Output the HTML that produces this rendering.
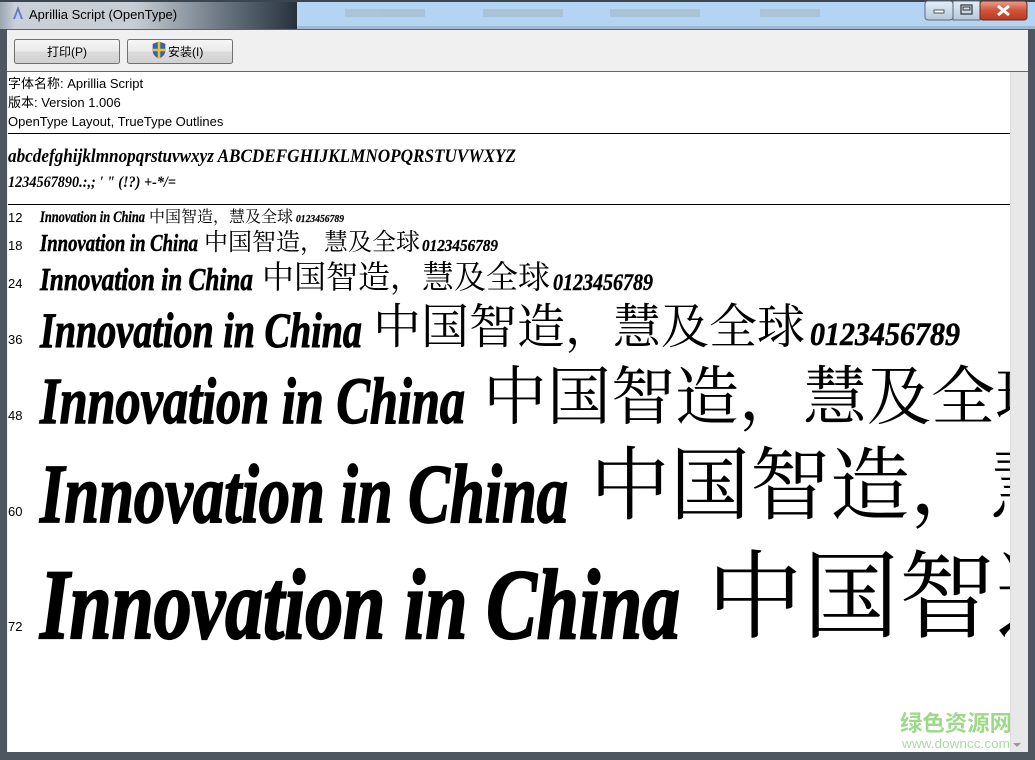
<!DOCTYPE html>
<html><head><meta charset="utf-8"><style>
html,body{margin:0;padding:0;width:1035px;height:760px;overflow:hidden;background:#fff;}
svg{display:block}
</style></head><body>
<svg width="1035" height="760" xmlns="http://www.w3.org/2000/svg">
<defs>
<linearGradient id="tb" x1="0" x2="1" y1="0" y2="0">
<stop offset="0" stop-color="#9aa6b2"/><stop offset="0.05" stop-color="#c9d0d8"/><stop offset="0.45" stop-color="#c8ced4"/><stop offset="0.75" stop-color="#6a7682"/><stop offset="1" stop-color="#26313c"/>
</linearGradient>
<linearGradient id="btn" x1="0" x2="0" y1="0" y2="1"><stop offset="0" stop-color="#f6f6f6"/><stop offset="0.5" stop-color="#e9e9e9"/><stop offset="0.51" stop-color="#dcdcdc"/><stop offset="1" stop-color="#d0d0d0"/></linearGradient>
<linearGradient id="cl" x1="0" x2="0" y1="0" y2="1"><stop offset="0" stop-color="#e8a090"/><stop offset="0.5" stop-color="#d0533c"/><stop offset="1" stop-color="#b83a20"/></linearGradient>
<linearGradient id="mm" x1="0" x2="0" y1="0" y2="1"><stop offset="0" stop-color="#e4eef8"/><stop offset="1" stop-color="#b4c8dc"/></linearGradient>
<clipPath id="cp"><rect x="8" y="72" width="1002" height="680"/></clipPath>
</defs>
<!-- frame -->
<rect x="0" y="0" width="1035" height="760" fill="#4e5660"/>
<rect x="297" y="0" width="738" height="29" fill="#b4d4f4"/>
<rect x="0" y="0" width="297" height="29" fill="url(#tb)"/>
<rect x="0" y="0" width="1035" height="2" fill="#3a4550"/>
<rect x="297" y="26" width="738" height="3" fill="#9fb7cf"/>
<g fill="#a8bccc" opacity="0.7"><rect x="345" y="9" width="80" height="8"/><rect x="483" y="9" width="80" height="8"/><rect x="610" y="9" width="90" height="8"/><rect x="760" y="9" width="60" height="8"/></g>
<path d="M13 19 L18 6 L23 19 Z" fill="#6878c8"/><path d="M15 19 L18 11 L21 19Z" fill="#c0c8f0"/>
<text x="29" y="19" font-family="Liberation Sans,sans-serif" font-size="13" fill="#000">Aprillia Script (OpenType)</text>
<!-- window buttons -->
<rect x="925" y="1" width="28" height="19" rx="3" fill="url(#mm)" stroke="#5a6c80"/>
<rect x="953" y="1" width="27" height="19" fill="url(#mm)" stroke="#5a6c80"/>
<rect x="980" y="1" width="47" height="19" rx="3" fill="url(#cl)" stroke="#6a2a20"/>
<rect x="934" y="10" width="10" height="3" fill="#fff" stroke="#333" stroke-width="0.8"/>
<rect x="961" y="5" width="11" height="9" fill="none" stroke="#333" stroke-width="1.2"/><rect x="963" y="7" width="7" height="3" fill="none" stroke="#333" stroke-width="1"/>
<path d="M998 6 L1009 15 M1009 6 L998 15" stroke="#fff" stroke-width="3"/>
<!-- client -->
<rect x="7" y="29" width="1021" height="723" fill="#f0f0f0"/>
<rect x="7" y="29" width="1021" height="1" fill="#5a6470"/>
<rect x="7" y="71" width="1021" height="1" fill="#666"/>
<rect x="8" y="72" width="1002" height="680" fill="#fff"/>
<rect x="1010" y="72" width="18" height="680" fill="#e8e8e8"/>
<rect x="1010" y="72" width="1" height="680" fill="#dcdcdc"/>
<path d="M1013 743 L1021 743 L1017 747 Z" fill="#999"/>
<!-- toolbar buttons -->
<rect x="14.5" y="39.5" width="105" height="24" rx="2" fill="url(#btn)" stroke="#707070"/>
<text x="67" y="56" text-anchor="middle" font-family="Liberation Sans,Noto Sans CJK SC,sans-serif" font-size="12">打印(P)</text>
<rect x="127.5" y="39.5" width="105" height="24" rx="2" fill="url(#btn)" stroke="#707070"/>
<path d="M153 44 L159 42 L165 44 L165 50 Q165 56 159 58 Q153 56 153 50 Z" fill="#2a64c8" stroke="#555" stroke-width="0.6"/>
<path d="M159 42 L159 58 M153 50 L165 50" stroke="#f0c020" stroke-width="2.5"/>
<text x="168" y="56" font-family="Liberation Sans,Noto Sans CJK SC,sans-serif" font-size="12">安装(I)</text>
<!-- info -->
<g font-family="Liberation Sans,Noto Sans CJK SC,sans-serif" font-size="13" fill="#000">
<text x="8" y="88">字体名称: Aprillia Script</text>
<text x="8" y="107">版本: Version 1.006</text>
<text x="8" y="126">OpenType Layout, TrueType Outlines</text>
</g>
<rect x="8" y="133" width="1002" height="1" fill="#000"/>
<rect x="8" y="204" width="1002" height="1" fill="#000"/>
<g clip-path="url(#cp)">
<g font-family="Liberation Serif,serif" font-style="italic" font-weight="bold" fill="#000">
<text x="8" y="162" font-size="19" textLength="508" lengthAdjust="spacingAndGlyphs">abcdefghijklmnopqrstuvwxyz ABCDEFGHIJKLMNOPQRSTUVWXYZ</text>
<text x="8" y="187" font-size="16" textLength="168" lengthAdjust="spacingAndGlyphs">1234567890.:,; ' " (!?) +-*/=</text>
</g>
<g font-family="Liberation Sans,sans-serif" font-size="13" fill="#000">
<text x="8" y="222">12</text><text x="8" y="250">18</text><text x="8" y="288">24</text><text x="8" y="344">36</text><text x="8" y="420">48</text><text x="8" y="516">60</text><text x="8" y="631">72</text>
</g>
<g font-family="Liberation Serif,serif" font-style="italic" font-weight="bold" fill="#000" stroke="#000">
<text x="40" y="222" font-size="16" stroke-width="0.3" textLength="105" lengthAdjust="spacingAndGlyphs">Innovation in China</text>
<text x="40" y="251" font-size="24" stroke-width="0.5" textLength="158" lengthAdjust="spacingAndGlyphs">Innovation in China</text>
<text x="40" y="290" font-size="32" stroke-width="0.7" textLength="213" lengthAdjust="spacingAndGlyphs">Innovation in China</text>
<text x="40" y="347" font-size="50" stroke-width="1" textLength="322" lengthAdjust="spacingAndGlyphs">Innovation in China</text>
<text x="40" y="423" font-size="66" stroke-width="1.4" textLength="425" lengthAdjust="spacingAndGlyphs">Innovation in China</text>
<text x="40" y="522" font-size="84" stroke-width="1.8" textLength="528" lengthAdjust="spacingAndGlyphs">Innovation in China</text>
<text x="40" y="638" font-size="100" stroke-width="2.2" textLength="640" lengthAdjust="spacingAndGlyphs">Innovation in China</text>
<text x="296" y="222" font-size="11" stroke-width="0.2" textLength="48" lengthAdjust="spacingAndGlyphs">0123456789</text>
<text x="422" y="251" font-size="17" stroke-width="0.3" textLength="76" lengthAdjust="spacingAndGlyphs">0123456789</text>
<text x="553" y="290" font-size="23" stroke-width="0.4" textLength="100" lengthAdjust="spacingAndGlyphs">0123456789</text>
<text x="810" y="345" font-size="33" stroke-width="0.6" textLength="150" lengthAdjust="spacingAndGlyphs">0123456789</text>
</g>
<g font-family="Noto Serif CJK SC,serif" fill="#000">
<text x="149" y="222" font-size="16">中国智造，慧及全球</text>
<text x="204" y="250" font-size="24">中国智造，慧及全球</text>
<text x="262" y="288" font-size="32">中国智造，慧及全球</text>
<text x="373" y="343" font-size="48">中国智造，慧及全球</text>
<text x="483" y="419" font-size="64">中国智造，慧及全球</text>
<text x="590" y="513" font-size="80">中国智造，慧及全球</text>
<text x="707" y="630" font-size="96">中国智造，慧及全球</text>
</g>
<text x="900" y="731" font-family="Liberation Sans,Noto Sans CJK SC,sans-serif" font-size="22" font-weight="bold" fill="#9ed98a" textLength="112" lengthAdjust="spacingAndGlyphs">绿色资源网</text>
<text x="902" y="748" font-family="Liberation Sans,sans-serif" font-size="13" fill="#a8dca0" textLength="108" lengthAdjust="spacingAndGlyphs">www.downcc.com</text>
</g>
</svg>
</body></html>
